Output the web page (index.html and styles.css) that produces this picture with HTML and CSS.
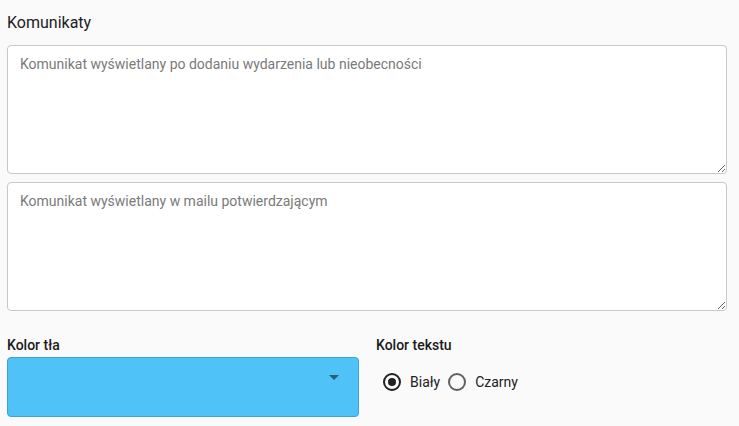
FILE: index.html
```html
<!DOCTYPE html>
<html lang="pl">
<head>
<meta charset="utf-8">
<link rel="stylesheet" href="styles.css">
</head>
<body>
<div class="page">
  <h2 class="title">Komunikaty</h2>
  <textarea class="msg" placeholder="Komunikat wyświetlany po dodaniu wydarzenia lub nieobecności"></textarea>
  <textarea class="msg last" placeholder="Komunikat wyświetlany w mailu potwierdzającym"></textarea>
  <div class="colors">
    <div class="col col-bg">
      <div class="label">Kolor tła</div>
      <div class="select">
        <svg class="arrow" width="10" height="5" viewBox="0 0 10 5"><path d="M0 0h10L5 5z" fill="#2a5f7a"/></svg>
      </div>
    </div>
    <div class="col col-text">
      <div class="label">Kolor tekstu</div>
      <div class="radios">
        <label class="radio"><span class="dot checked"></span>Biały</label>
        <label class="radio"><span class="dot"></span>Czarny</label>
      </div>
    </div>
  </div>
</div>
</body>
</html>
```

FILE: styles.css
```css
html, body {
  margin: 0;
  background: #fafafa;
  font-family: Roboto, "Noto Sans", sans-serif;
  color: #212121;
}
.page {
  padding: 13px 12px 0 7px;
}
.title {
  margin: 0 0 12px 0;
  font-size: 16px;
  font-weight: 400;
  line-height: 20px;
  color: #212121;
}
.msg {
  display: block;
  box-sizing: border-box;
  width: 100%;
  height: 129px;
  margin: 0 0 8px 0;
  padding: 9px 12px;
  border: 1px solid #c8c8c8;
  border-radius: 4px;
  background: #fff;
  font-family: Roboto, "Noto Sans", sans-serif;
  font-size: 14px;
  line-height: 18px;
  resize: vertical;
  outline: none;
}
.msg.last {
  margin-bottom: 0;
}
.msg::placeholder {
  color: #7a7a7a;
}
.colors {
  display: flex;
  gap: 17px;
  margin-top: 25px;
}
.col-bg {
  width: 352px;
}
.label {
  font-size: 14px;
  font-weight: 500;
  line-height: 18px;
  color: #1a1a1a;
  margin-bottom: 3px;
}
.select {
  box-sizing: border-box;
  height: 60px;
  background: #4fc3f7;
  border: 1px solid #3fa3d0;
  border-radius: 4px;
  position: relative;
}
.arrow {
  position: absolute;
  right: 19px;
  top: 17px;
}
.radios {
  display: flex;
  align-items: center;
  padding: 16px 0 0 7px;
}
.radio {
  display: flex;
  align-items: center;
  font-size: 14px;
  color: #212121;
  margin-right: 8px;
}
.dot {
  box-sizing: border-box;
  width: 18px;
  height: 18px;
  border: 2px solid #616161;
  border-radius: 50%;
  margin-right: 9px;
  position: relative;
}
.dot.checked {
  border-color: #212121;
}
.dot.checked::after {
  content: "";
  position: absolute;
  left: 3px;
  top: 3px;
  width: 8px;
  height: 8px;
  border-radius: 50%;
  background: #212121;
}
```
